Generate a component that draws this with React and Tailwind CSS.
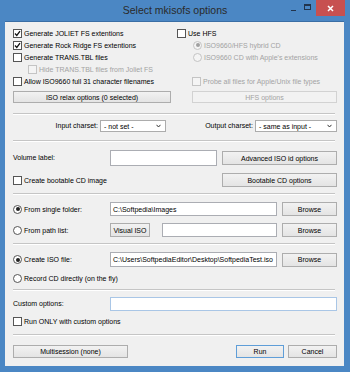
import React from "react";

const F = "font-['Liberation_Sans',Arial,sans-serif]";

function Check({ checked, disabled, label, className = "" }) {
  return (
    <div className={`flex items-center h-[12px] ${className}`}>
      <div
        className={`w-[9px] h-[9px] border flex items-center justify-center shrink-0 ${
          disabled ? "border-[#c4c4c4] bg-[#f4f4f4]" : "border-[#555] bg-white"
        }`}
      >
        {checked && (
          <svg width="7" height="7" viewBox="0 0 7 7">
            <path d="M1 3.5 L2.8 5.4 L6 1.2" stroke="#111" strokeWidth="1.3" fill="none" />
          </svg>
        )}
      </div>
      <span className={`ml-[2px] whitespace-nowrap leading-none ${disabled ? "text-[#a3a3a3]" : "text-black"}`}>
        {label}
      </span>
    </div>
  );
}

function Radio({ checked, disabled, label, className = "" }) {
  return (
    <div className={`flex items-center h-[12px] ${className}`}>
      <div
        className={`w-[9px] h-[9px] rounded-full border flex items-center justify-center shrink-0 ${
          disabled ? "border-[#c4c4c4] bg-[#f4f4f4]" : "border-[#555] bg-white"
        }`}
      >
        {checked && (
          <div className={`w-[4px] h-[4px] rounded-full ${disabled ? "bg-[#a0a0a0]" : "bg-[#222]"}`} />
        )}
      </div>
      <span className={`ml-[2px] whitespace-nowrap leading-none ${disabled ? "text-[#a3a3a3]" : "text-black"}`}>
        {label}
      </span>
    </div>
  );
}

function Btn({ children, className = "", disabled, def }) {
  return (
    <div
      className={`flex items-center justify-center border leading-none whitespace-nowrap ${
        disabled
          ? "border-[#d2d2d2] bg-[#f2f2f2] text-[#a3a3a3]"
          : def
          ? "border-[#5f9ed8] bg-gradient-to-b from-[#f2f2f2] to-[#e4e4e4] text-black"
          : "border-[#adadad] bg-gradient-to-b from-[#f2f2f2] to-[#e4e4e4] text-black"
      } ${className}`}
    >
      {children}
    </div>
  );
}

function Input({ value = "", className = "" }) {
  return (
    <div className={`flex items-center border border-[#abadb3] bg-white px-[2px] leading-none whitespace-nowrap overflow-hidden ${className}`}>
      {value}
    </div>
  );
}

function Select({ value, className = "" }) {
  return (
    <div className={`flex items-center justify-between border border-[#acacac] bg-white pl-[3px] pr-[4px] leading-none ${className}`}>
      <span className="whitespace-nowrap">{value}</span>
      <svg width="5" height="4" viewBox="0 0 5 4">
        <path d="M0.5 0.8 L2.5 3 L4.5 0.8" stroke="#333" strokeWidth="1" fill="none" />
      </svg>
    </div>
  );
}

function Sep({ className = "" }) {
  return (
    <div className={`h-[2px] w-[322px] flex flex-col ${className}`}>
      <div className="h-[1px] bg-[#c5c5c5]" />
      <div className="h-[1px] bg-white" />
    </div>
  );
}

export default function App() {
  return (
    <div className={`w-[350px] h-[372px] bg-[#4b87c4] flex flex-col ${F} text-[7px] text-black`}>
      {/* title bar */}
      <div className="h-[21px] flex items-start relative">
        <div className="flex-1 h-[21px] flex items-center justify-center text-[10.5px] text-[#2a2a2a] pt-[1px]">
          Select mkisofs options
        </div>
        <div className="absolute right-[5px] top-0 flex items-start">
          <div className="w-[14px] h-[16px] flex items-center justify-center">
            <div className="w-[5px] h-[1.5px] bg-[#22344d] mt-[5px]" />
          </div>
          <div className="w-[14px] h-[16px] flex items-center justify-center mr-[2px]">
            <div className="w-[7px] h-[6px] border border-[#22344d] border-t-2 -mt-[2px]" />
          </div>
          <div className="w-[29px] h-[16px] bg-[#c75050] flex items-center justify-center">
            <svg width="7" height="7" viewBox="0 0 7 7">
              <path d="M1 1 L6 6 M6 1 L1 6" stroke="white" strokeWidth="1.5" />
            </svg>
          </div>
        </div>
      </div>
      {/* client */}
      <div className="ml-[5px] mr-[6px] h-[345px] bg-[#f0f0f0] border-t border-[#3a6ea5] flex flex-col pl-[8px] pt-[5px]">
        {/* top section */}
        <div className="flex h-[76px]">
          <div className="w-[164px] flex flex-col">
            <Check checked label="Generate JOLIET FS extentions" />
            <Check checked label="Generate Rock Ridge FS extentions" />
            <Check label="Generate TRANS.TBL files" />
            <Check disabled label="Hide TRANS.TBL files from Joliet FS" className="ml-[15px]" />
            <Check label="Allow ISO9660 full 31 character filenames" />
            <Btn className="mt-[4px] w-[158px] h-[12px]">ISO relax options (0 selected)</Btn>
          </div>
          <div className="flex flex-col">
            <Check label="Use HFS" />
            <Radio checked disabled label="ISO9660/HFS hybrid CD" className="ml-[16px]" />
            <Radio disabled label="ISO9660 CD with Apple's extensions" className="ml-[16px]" />
            <div className="h-[12px]" />
            <Check disabled label="Probe all files for Apple/Unix file types" className="ml-[15px]" />
            <Btn disabled className="mt-[4px] ml-[15px] w-[145px] h-[12px]">HFS options</Btn>
          </div>
        </div>
        <Sep className="mt-[10px]" />
        {/* charset */}
        <div className="mt-[5px] h-[12px] flex items-center">
          <div className="w-[85px] text-right">Input charset:</div>
          <Select value="- not set -" className="ml-[2px] w-[66px] h-[12px]" />
          <div className="w-[87px] text-right">Output charset:</div>
          <Select value="- same as input -" className="ml-[2px] w-[82px] h-[12px]" />
        </div>
        <Sep className="mt-[8px]" />
        {/* volume */}
        <div className="mt-[8px] h-[16px] flex items-center">
          <div className="w-[97px]">Volume label:</div>
          <Input className="w-[107px] h-[16px]" />
          <Btn className="ml-[5px] w-[115px] h-[14px]">Advanced ISO id options</Btn>
        </div>
        <div className="mt-[7px] h-[14px] flex items-center">
          <div className="w-[209px]">
            <Check label="Create bootable CD image" />
          </div>
          <Btn className="w-[115px] h-[14px]">Bootable CD options</Btn>
        </div>
        <Sep className="mt-[6px]" />
        {/* source */}
        <div className="mt-[7px] h-[14px] flex items-center">
          <div className="w-[97px]">
            <Radio checked label="From single folder:" />
          </div>
          <Input value="C:\Softpedia\Images" className="w-[167px] h-[14px]" />
          <Btn className="ml-[5px] w-[55px] h-[14px]">Browse</Btn>
        </div>
        <div className="mt-[7px] h-[14px] flex items-center">
          <div className="w-[97px]">
            <Radio label="From path list:" />
          </div>
          <Btn className="w-[40px] h-[14px]">Visual ISO</Btn>
          <Input className="ml-[12px] w-[115px] h-[14px]" />
          <Btn className="ml-[5px] w-[55px] h-[14px]">Browse</Btn>
        </div>
        <Sep className="mt-[6px]" />
        {/* dest */}
        <div className="mt-[7px] h-[15px] flex items-center">
          <div className="w-[97px]">
            <Radio checked label="Create ISO file:" />
          </div>
          <Input value="C:\Users\SoftpediaEditor\Desktop\SoftpediaTest.iso" className="w-[167px] h-[15px]" />
          <Btn className="ml-[5px] w-[55px] h-[14px]">Browse</Btn>
        </div>
        <div className="mt-[5px] h-[12px] flex items-center">
          <Radio label="Record CD directly (on the fly)" />
        </div>
        <Sep className="mt-[5px]" />
        {/* custom */}
        <div className="mt-[6px] h-[14px] flex items-center">
          <div className="w-[97px]">Custom options:</div>
          <div className="w-[227px] h-[14px] border border-[#a9c6e6] bg-white" />
        </div>
        <div className="mt-[4px] h-[12px] flex items-center">
          <Check label="Run ONLY with custom options" />
        </div>
        <Sep className="mt-[7px]" />
        {/* bottom buttons */}
        <div className="mt-[9px] h-[13px] flex items-center">
          <Btn className="w-[115px] h-[13px]">Multisession (none)</Btn>
          <div className="w-[108px]" />
          <Btn def className="w-[48px] h-[13px]">Run</Btn>
          <Btn className="ml-[4px] w-[49px] h-[13px]">Cancel</Btn>
        </div>
      </div>
    </div>
  );
}
